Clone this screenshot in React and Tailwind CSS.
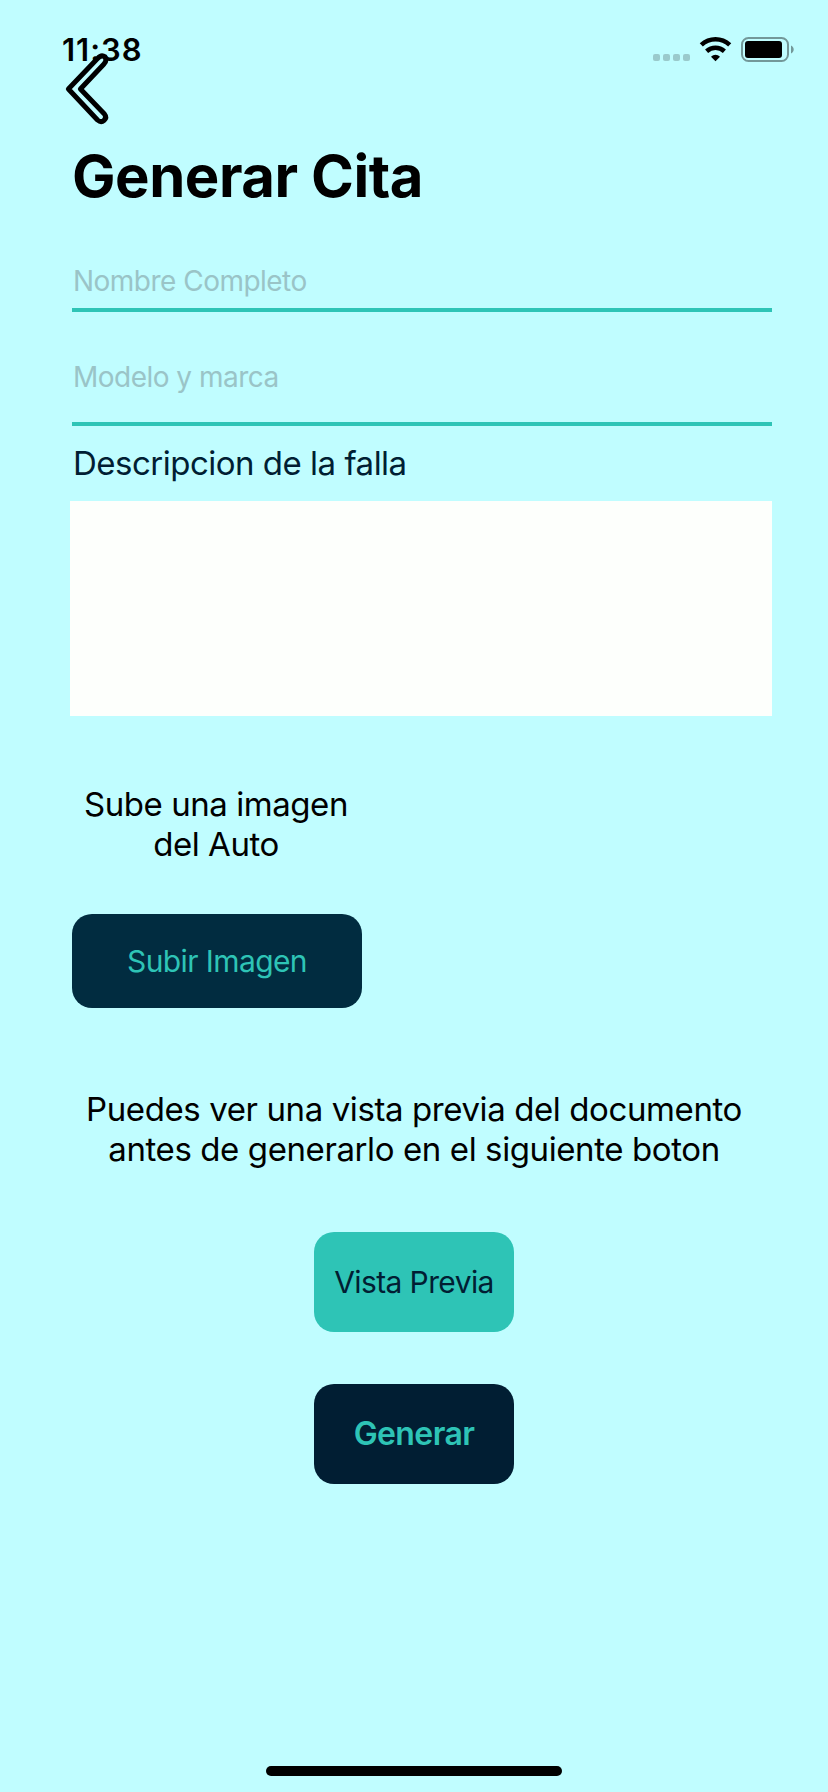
const StatusBar = () => (
  <header className="flex h-[92px] items-start justify-between pl-[62px] pr-[33px]">
    <span className="mt-[32px] text-[31px] font-semibold leading-[36px] tracking-[1px] text-black">11:38</span>
    <div className="mt-[36px] flex items-start">
      <div className="mt-[18px] flex gap-[3px]">
        <i className="size-[7px] rounded-[2px] bg-[#9acacc]" />
        <i className="size-[7px] rounded-[2px] bg-[#9acacc]" />
        <i className="size-[7px] rounded-[2px] bg-[#9acacc]" />
        <i className="size-[7px] rounded-[2px] bg-[#9acacc]" />
      </div>
      <svg className="ml-[9px]" width="33" height="26" viewBox="0 0 33 26" fill="none">
        <path d="M2.3 8.9C10.5 1.4 22.5 1.4 30.7 8.9" stroke="#000" strokeWidth="4.6" />
        <path d="M7.6 15.2C12.8 10.6 20.2 10.6 25.4 15.2" stroke="#000" strokeWidth="4.6" />
        <path d="M16.5 25.2L12 20.8C14.5 18 18.5 18 21 20.8Z" fill="#000" />
      </svg>
      <svg className="ml-[9px]" width="54" height="27" viewBox="0 0 54 27" fill="none">
        <rect x="1" y="2" width="46" height="23" rx="6.5" stroke="#739899" strokeWidth="2" />
        <rect x="4" y="5" width="37" height="17" rx="3" fill="#000" />
        <path d="M50 9.5C53.6 11 53.6 16 50 17.5Z" fill="#739899" />
      </svg>
    </div>
  </header>
);

const Field = ({ placeholder, className }) => (
  <div className={`border-b-4 border-[#2ec4b6] pl-px ${className}`}>
    <input
      type="text"
      placeholder={placeholder}
      className="block h-[40px] w-full bg-transparent text-[28px] tracking-[-0.52px] text-black outline-none placeholder:text-[#9ac4c7]"
    />
  </div>
);

export default function App() {
  return (
    <div className="relative flex h-[1792px] w-[828px] flex-col overflow-hidden bg-[#c0fdff] font-['Inter',sans-serif]">
      <StatusBar />
      <button aria-label="Atrás" className="absolute left-[62px] top-[48px]">
        <svg width="50" height="80" viewBox="0 0 50 80" fill="none">
          <path
            d="M6.4 41L35.5 10.6Q39.5 6 43 9Q45.4 12 42 16L18.4 41L42.4 66Q45.2 69.4 42 72.4Q39 75.2 35.5 72Z"
            fill="#c0fdff"
            stroke="#000"
            strokeWidth="5"
            strokeLinejoin="round"
          />
        </svg>
      </button>
      <main className="flex flex-col pl-[72px] pr-[56px]">
        <h1 className="mt-[48px] h-[72px] whitespace-nowrap text-[58px] font-bold leading-[72px] tracking-[-0.45px]">
          Generar Cita
        </h1>
        <Field placeholder="Nombre Completo" className="mt-[49px] h-[51px]" />
        <Field placeholder="Modelo y marca" className="mt-[45px] h-[69px]" />
        <label className="ml-px mt-[17px] h-[40px] whitespace-nowrap text-[33px] leading-[40px] tracking-[-0.5px] text-[#011e33]">
          Descripcion de la falla
        </label>
        <textarea className="-ml-[2px] mt-[18px] block h-[215px] w-[702px] resize-none bg-[#fdfffc] outline-none" />
        <p className="mt-[68px] w-[288px] whitespace-nowrap text-center text-[33px] leading-[40px] tracking-[-0.45px] text-black">
          Sube una imagen
          <br />
          del Auto
        </p>
        <button className="mt-[50px] h-[94px] w-[290px] rounded-[20px] bg-[#012c40] text-[30px] tracking-[-0.6px] text-[#2ec4b6]">
          Subir Imagen
        </button>
        <p className="mt-[81px] w-[684px] whitespace-nowrap text-center text-[33px] leading-[40px] tracking-[-0.4px] text-black">
          Puedes ver una vista previa del documento
          <br />
          antes de generarlo en el siguiente boton
        </p>
        <div className="mt-[63px] flex w-[684px] flex-col items-center gap-[52px]">
          <button className="h-[100px] w-[200px] rounded-[20px] bg-[#2ec4b6] text-[30px] tracking-[-0.6px] text-[#011e33]">
            Vista Previa
          </button>
          <button className="h-[100px] w-[200px] rounded-[20px] bg-[#011e33] text-[32px] font-semibold tracking-[-0.6px] text-[#2ec4b6]">
            Generar
          </button>
        </div>
      </main>
      <div className="mb-[16px] mt-auto h-[10px] w-[296px] self-center rounded-full bg-black" />
    </div>
  );
}
